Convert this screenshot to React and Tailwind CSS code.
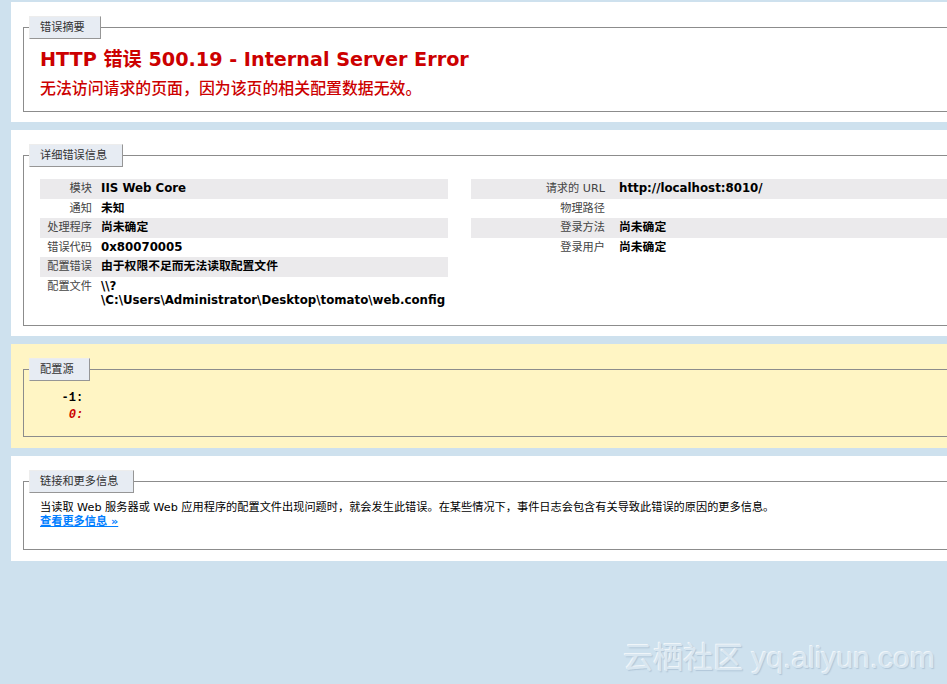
const leftRows = [
  { label: '模块', value: 'IIS Web Core', alt: true },
  { label: '通知', value: '未知' },
  { label: '处理程序', value: '尚未确定', alt: true },
  { label: '错误代码', value: '0x80070005' },
  { label: '配置错误', value: '由于权限不足而无法读取配置文件', alt: true },
  { label: '配置文件', value: (<>\\?<br />\C:\Users\Administrator\Desktop\tomato\web.config</>) },
];

const rightRows = [
  { label: '请求的 URL', value: 'http://localhost:8010/', alt: true },
  { label: '物理路径', value: '' },
  { label: '登录方法', value: '尚未确定', alt: true },
  { label: '登录用户', value: '尚未确定' },
];

function Legend({ children }) {
  return (
    <legend className="ml-[-11px] border-t border-l border-t-[#EDEDED] border-l-[#EDEDED] border-r border-b border-r-[#969696] border-b-[#969696] bg-[#E7ECF3] pl-[10px] pr-[15px] py-[4px] leading-[13px] text-[#333]">
      {children}
    </legend>
  );
}

function DetailTable({ rows, labelClass }) {
  return (
    <div>
      {rows.map((r, i) => (
        <div key={i} className={`flex py-[3px] leading-[13.6px] ${r.alt ? 'bg-[#EBEAEC]' : ''}`}>
          <div className={`${labelClass} shrink-0 text-right text-[#444]`}>{r.label}</div>
          <div className="text-[11.8px] font-bold text-black whitespace-nowrap">{r.value}</div>
        </div>
      ))}
    </div>
  );
}

export default function App() {
  return (
    <div className="relative min-h-screen w-full overflow-hidden bg-[#CEE1EE] pt-[2px] text-[11.2px] font-['DejaVu_Sans','Noto_Sans_CJK_SC',sans-serif]">
      {/* summary */}
      <div className="ml-[11px] w-[1000px] bg-white px-[12px] pt-[14px] pb-[10px]">
        <fieldset className="border border-[#8c8c8c] pl-[16px] pr-[16px] pt-[9px] pb-[13px]">
          <Legend>错误摘要</Legend>
          <h2 className="text-[19.2px] leading-[23px] font-bold text-[#CC0000]">HTTP 错误 500.19 - Internal Server Error</h2>
          <h3 className="mt-[7px] text-[15.9px] leading-[20px] font-medium text-[#CC0000] font-['Noto_Sans_CJK_SC',sans-serif]">无法访问请求的页面，因为该页的相关配置数据无效。</h3>
        </fieldset>
      </div>

      {/* details */}
      <div className="ml-[11px] mt-[8px] w-[1000px] bg-white px-[12px] pt-[14px] pb-[10px]">
        <fieldset className="border border-[#8c8c8c] pl-[16px] pr-[16px] pt-[12px] pb-[15px]">
          <Legend>详细错误信息</Legend>
          <div className="flex gap-[23px]">
            <div className="w-[408px]">
              <DetailTable rows={leftRows} labelClass="w-[61px] pr-[9px]" />
            </div>
            <div className="flex-1">
              <DetailTable rows={rightRows} labelClass="w-[148px] pr-[14px]" />
            </div>
          </div>
        </fieldset>
      </div>

      {/* config source */}
      <div className="ml-[11px] mt-[8px] w-[1000px] bg-[#FFF5C4] px-[12px] pt-[14px] pb-[11px]">
        <fieldset className="border border-[#8c8c8c] pl-[16px] pr-[16px] pt-[9px] pb-[12px]">
          <Legend>配置源</Legend>
          <pre className="text-[12px] leading-[17px] font-bold text-black font-['Liberation_Mono',monospace]">
            {'   -1: \n'}
            <span className="italic text-[#CC0000]">{'    0: '}</span>
          </pre>
        </fieldset>
      </div>

      {/* links */}
      <div className="ml-[11px] mt-[8px] w-[1000px] bg-white px-[12px] pt-[14px] pb-[11px]">
        <fieldset className="border border-[#8c8c8c] pl-[16px] pr-[16px] pt-[8px] pb-[20px]">
          <Legend>链接和更多信息</Legend>
          <p className="leading-[14px] text-black">
            当读取 Web 服务器或 Web 应用程序的配置文件出现问题时，就会发生此错误。在某些情况下，事件日志会包含有关导致此错误的原因的更多信息。
          </p>
          <a href="#" className="block w-fit leading-[14px] font-bold text-[#007EFF] underline">查看更多信息 »</a>
        </fieldset>
      </div>

      <div className="absolute right-[12px] bottom-[11px] text-[30px] leading-[30px] text-[#d9e7f1] font-['Liberation_Sans','Noto_Sans_CJK_SC',sans-serif] [text-shadow:1px_1px_1px_rgba(90,120,150,0.25),-1px_-1px_0_rgba(255,255,255,0.7)]">
        云栖社区 yq.aliyun.com
      </div>
    </div>
  );
}
